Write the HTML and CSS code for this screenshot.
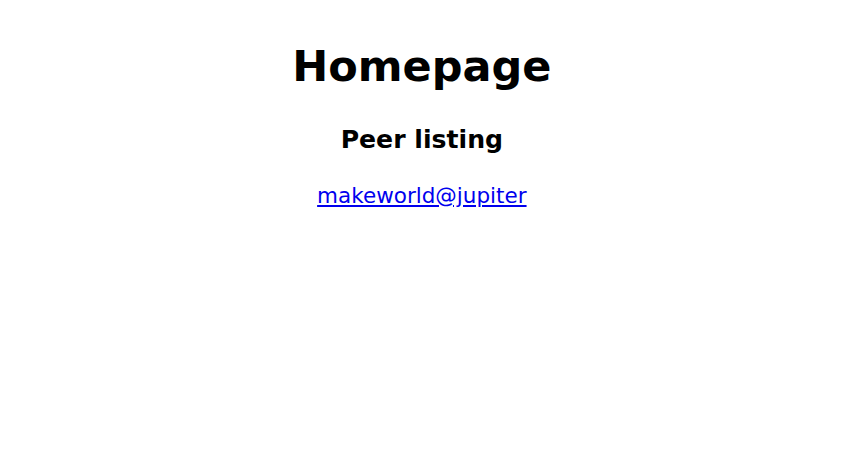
FILE: index.html
```html
<!DOCTYPE html>
<html>
<head>
<meta charset="utf-8">
<title>Homepage</title>
<link rel="stylesheet" href="styles.css">
</head>
<body class="page">
<main class="content">
<h1 class="title">Homepage</h1>
<h3 class="subtitle">Peer listing</h3>
<p class="peer"><a class="peer-link" href="#">makeworld@jupiter</a></p>
</main>
</body>
</html>
```
FILE: styles.css
```css
html { font-size: 21.5px; }
.page {
  margin: 10.7px 18px 10.7px 10.7px;
  font-family: "DejaVu Sans", sans-serif;
  font-size: 21.5px;
  line-height: 1.3;
  background: #fff;
  color: #000;
}
.content { text-align: center; }
.title { font-size: 2em; margin: 0.67em 0; font-weight: bold; }
.subtitle { font-size: 1.17em; margin: 1em 0; font-weight: bold; }
.peer { margin: 1em 0; }
.peer-link { color: #0000ee; text-decoration: underline; }
```
